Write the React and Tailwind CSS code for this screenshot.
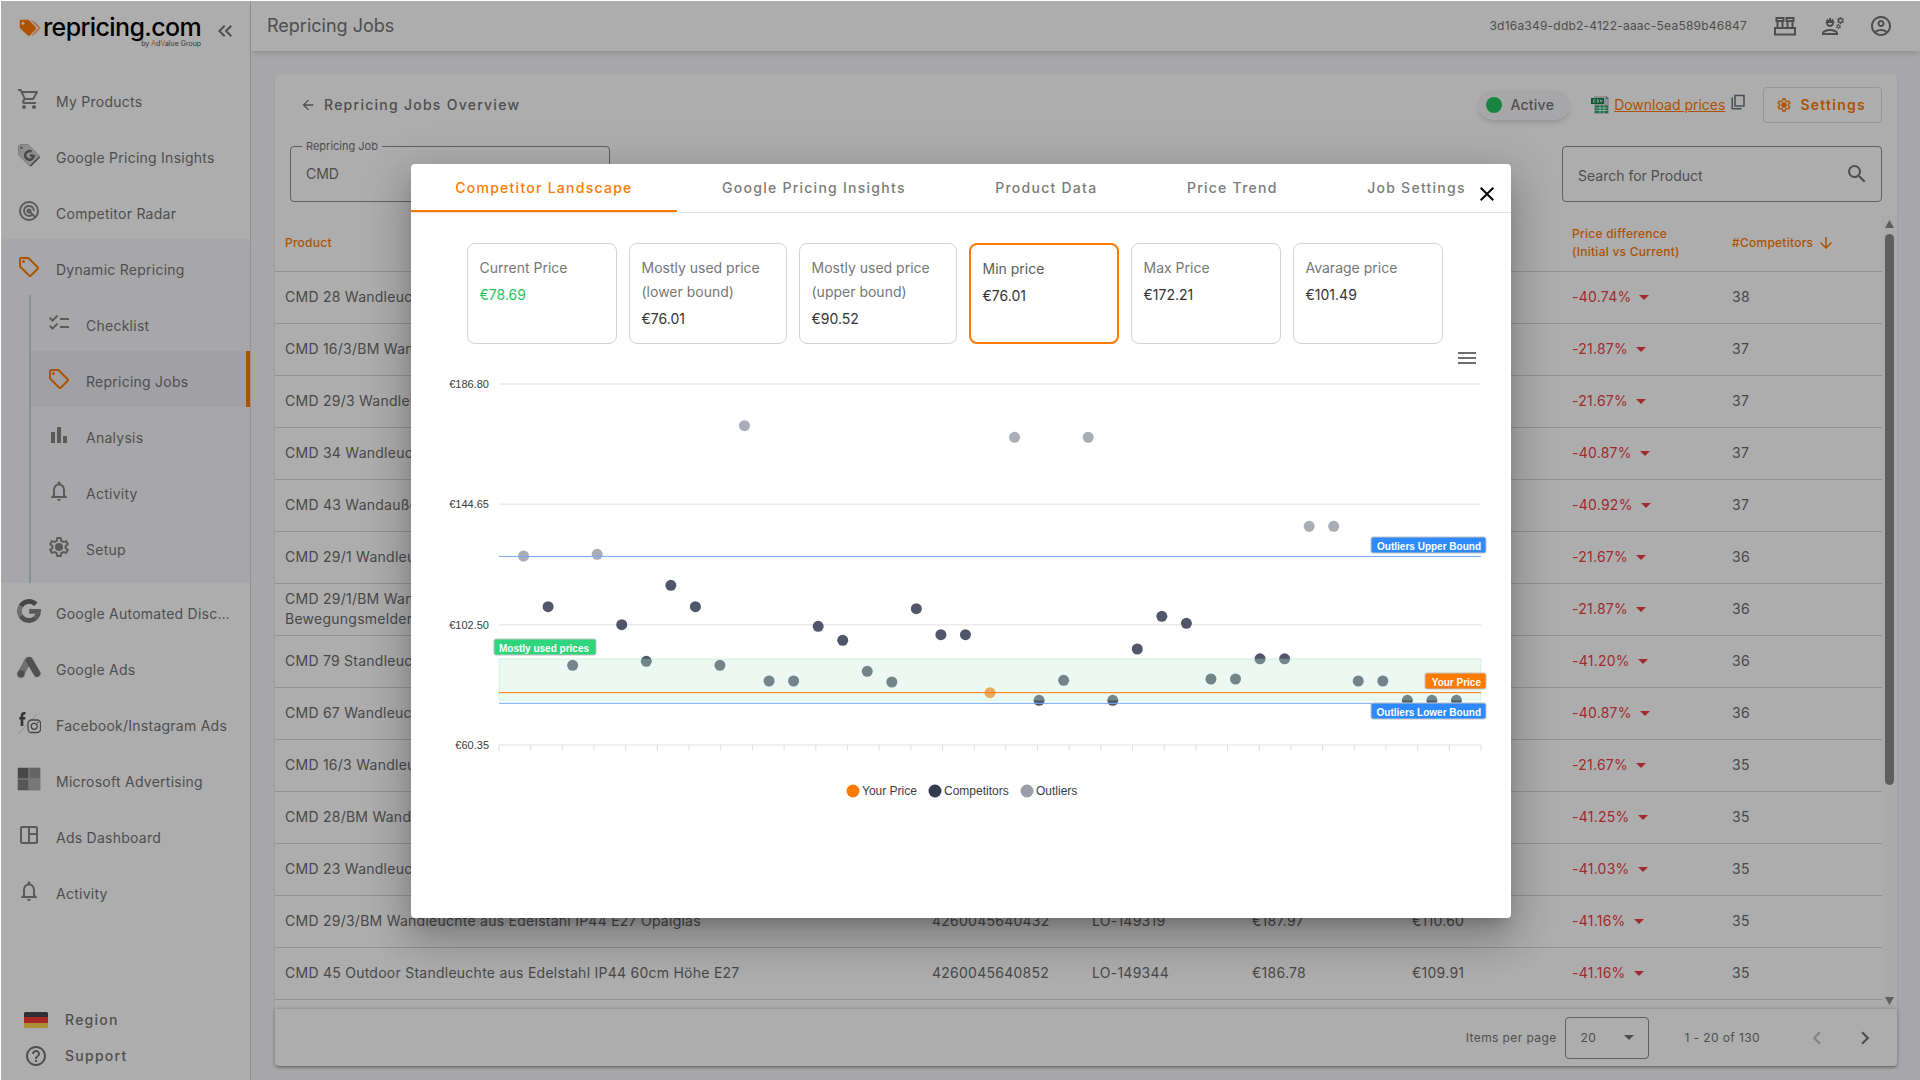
import { useState } from 'react';
import {
  MdArrowBack,
  MdArrowDownward,
  MdArrowDropDown,
  MdBarChart,
  MdChecklist,
  MdChevronLeft,
  MdChevronRight,
  MdClose,
  MdHelpOutline,
  MdKeyboardDoubleArrowLeft,
  MdMenu,
  MdNotificationsNone,
  MdOutlineAccountCircle,
  MdOutlineEngineering,
  MdOutlineLocalOffer,
  MdOutlineShoppingCart,
  MdOutlineSpaceDashboard,
  MdSearch,
} from 'react-icons/md';

/* ---------- Icons ---------- */

const TagLogo = () => (
  <svg viewBox="0 0 22 18" className="mt-1.5 h-[18px] w-[22px] shrink-0">
    <path d="M12.5 1.5l7.5 7.5-7 7.5M15.5 3l5.5 6-5.5 6" fill="none" stroke="#ffb380" strokeWidth="1.2" />
    <path d="M2 .8h6.6c.7 0 1.2.3 1.7.8l6.2 6.300c.8.8.8 1.800 0 2.600l-5.400 5.700c-.8.8-1.800.8-2.600 0L1.600 9.800C1 9.200.7 8.700.7 8V2.200C.7 1.400 1.200.8 2 .8z" fill="#ff7a00" />
    <circle cx="4" cy="4.2" r="1.5" fill="#fff" />
  </svg>
);

const PricingTagIcon = () => (
  <svg viewBox="0 0 24 24" className="h-6 w-6">
    <path d="M3 1.500h8l11 11c.8.8.8 1.600 0 2.400l-7.500 7.500c-.8.8-1.600.8-2.400 0L1.500 12V3z" fill="#d2d2d2" stroke="#b8b8b8" />
    <path d="M22.500 14l-9 9" stroke="#666" strokeWidth="1.500" />
    <circle cx="4.500" cy="4.800" r="1.200" fill="#777" />
    <path d="M14.500 8.600a4.300 4.300 0 1 0 2.200 4.300l-3.600-.7" fill="none" stroke="#6a6a6a" strokeWidth="2.400" />
  </svg>
);

const RadarIcon = () => (
  <svg viewBox="0 0 24 24" className="h-6 w-6" fill="none" stroke="#858585" strokeWidth="2">
    <circle cx="12" cy="12" r="9" />
    <path d="M15.500 15.500A5 5 0 1 1 17 12" />
    <circle cx="12" cy="12" r="1.500" fill="#858585" />
    <path d="M12 12l6 6" />
  </svg>
);

const GoogleIcon = () => (
  <svg viewBox="0 0 24 24" className="h-6 w-6" fill="none" strokeWidth="4.800">
    <path d="M18.800 5.300A9.600 9.600 0 0 0 3.800 7.100" stroke="#666" />
    <path d="M3.800 7.100a9.600 9.600 0 0 0 0 9.800" stroke="#a2a2a2" />
    <path d="M3.800 16.900a9.600 9.600 0 0 0 14.700 2" stroke="#777" />
    <path d="M18.500 18.900a9 9 0 0 0 3-6.600H12.200" stroke="#858585" />
  </svg>
);

const GoogleAdsIcon = () => (
  <svg viewBox="0 0 24 24" className="h-6 w-6" strokeLinecap="round" strokeWidth="7">
    <path d="M11 5.500L4 18.500" stroke="#a6a6a6" />
    <path d="M12.500 5.500l7.500 13" stroke="#787878" />
    <circle cx="4" cy="19" r="3.700" fill="#757575" />
  </svg>
);

const FacebookInstagramIcon = () => (
  <svg viewBox="0 0 24 24" className="h-6 w-6" fill="none">
    <path d="M8.500 2.200H7.300C5.700 2.200 5 3 5 4.500V15M2.300 7.200h6" stroke="#4b4b4b" strokeWidth="2.600" />
    <path d="M20 3L1 23" stroke="#ccc" strokeWidth=".8" />
    <rect x="11" y="9" width="12.500" height="12.500" rx="3.500" stroke="#6a6a6a" strokeWidth="1.300" />
    <circle cx="17.200" cy="15.300" r="3" stroke="#6a6a6a" strokeWidth="1.300" />
    <circle cx="20.800" cy="11.600" r=".8" fill="#6a6a6a" />
  </svg>
);

const MicrosoftIcon = () => (
  <svg viewBox="0 0 24 24" className="h-6 w-6">
    <path d="M.5.500h23v23H.5z" fill="#b5b5b5" />
    <path d="M1 1h10.300v10.300H1z" fill="#6b6b6b" />
    <path d="M12.700 1H23v10.300H12.700z" fill="#969696" />
    <path d="M1 12.700h10.300V23H1z" fill="#808080" />
    <path d="M12.700 12.700H23V23H12.700z" fill="#b0b0b0" />
  </svg>
);

const GearIcon = ({ className }) => (
  <svg viewBox="0 0 24 24" className={className} fill="currentColor">
    <path
      fillRule="evenodd"
      d="M14.500 22h-5l-.6-3.100-1.500-.9-3 1-2.500-4.300L4.300 12.700v-1.500L1.900 9.200l2.500-4.300 3 1 1.500-.8L9.500 2h5l.6 3.100 1.500.8 3-1 2.500 4.300-2.400 2v1.600l2.400 2-2.500 4.300-3-1-1.500.8zM11.100 20h1.800l.5-2.500 2.800-1.600 2.300.8 1-1.600-1.900-1.600v-3.100l1.900-1.500-1-1.700-2.300.9-2.800-1.600L12.900 4h-1.800l-.5 2.500-2.800 1.600-2.300-.9-1 1.700 1.900 1.500v3.100l-1.900 1.600 1 1.600 2.300-.8 2.800 1.600z"
    />
    <circle cx="12" cy="12" r="4" />
  </svg>
);

const ToolboxIcon = () => (
  <svg viewBox="0 0 24 24" className="h-6 w-6" fill="none" stroke="currentColor" strokeWidth="2">
    <path d="M2 14h20v6.500H2zM4.500 14V7.500M9.500 14V7.500M14.500 14V7.500M19.500 14V7.500M3.500 4h7v3h-7zM13.500 4h7v3h-7z" />
  </svg>
);

const CsvIcon = () => (
  <svg viewBox="0 0 20 20" className="h-5 w-5">
    <path d="M4 1h12l3 3v15H4z" fill="#d5d5d5" />
    <path d="M16 1l3 3h-3z" fill="#888" />
    <path d="M1 3h13v6H1z" fill="#14804a" />
    <path d="M3.500 4.800h2M3.500 4.800v2.400h2M8.500 4.800H7v1.200h1.500v1.200H7M10 4.500l1.200 2.700 1.200-2.700" fill="none" stroke="#fff" strokeWidth=".8" />
    <path d="M5 10.500h13V18H5z" fill="#22a566" />
    <path d="M5.500 13h12M5.500 15.500h12M10 10.500V18M14 10.500V18" stroke="#e7fff2" strokeWidth=".9" />
  </svg>
);

const CopyIcon = () => (
  <svg viewBox="0 0 14 16" className="h-4 w-[14px]" fill="none" stroke="#6b7280" strokeWidth="1.500">
    <path d="M4 1.500h9v10.500H4z" />
    <path d="M1.200 3.500v11.200h9.300" />
  </svg>
);

const GermanFlag = () => (
  <svg viewBox="0 0 24 16" className="h-4 w-6">
    <rect width="24" height="16" rx="1.500" fill="#ffd34d" />
    <path d="M0 5h24v6H0z" fill="#f93939" />
    <path d="M1.500 0h21A1.500 1.500 0 0 1 24 1.500V5H0V1.500A1.500 1.500 0 0 1 1.500 0z" fill="#464655" />
  </svg>
);

/* ---------- Data ---------- */

const mainNav = [
  { label: 'My Products', icon: <MdOutlineShoppingCart size={24} /> },
  { label: 'Google Pricing Insights', icon: <PricingTagIcon /> },
  { label: 'Competitor Radar', icon: <RadarIcon /> },
];

const repricingNav = [
  { label: 'Checklist', icon: <MdChecklist size={24} /> },
  { label: 'Repricing Jobs', icon: <MdOutlineLocalOffer size={24} className="text-[#ff7a00]" />, active: true },
  { label: 'Analysis', icon: <MdBarChart size={24} /> },
  { label: 'Activity', icon: <MdNotificationsNone size={24} /> },
  { label: 'Setup', icon: <GearIcon className="h-6 w-6" /> },
];

const adsNav = [
  { label: 'Google Automated Discounts', icon: <GoogleIcon /> },
  { label: 'Google Ads', icon: <GoogleAdsIcon /> },
  { label: 'Facebook/Instagram Ads', icon: <FacebookInstagramIcon /> },
  { label: 'Microsoft Advertising', icon: <MicrosoftIcon /> },
  { label: 'Ads Dashboard', icon: <MdOutlineSpaceDashboard size={24} /> },
  { label: 'Activity', icon: <MdNotificationsNone size={24} /> },
];

const products = [
  { name: 'CMD 28 Wandleuchte aus Edelstahl IP44 E27', ean: '4260045640289', sku: 'LO-149301', initial: '€132.77', current: '€78.69', diff: '-40.74%', competitors: 38 },
  { name: 'CMD 16/3/BM Wandleuchte aus Edelstahl IP44', ean: '4260045640166', sku: 'LO-149305', initial: '€154.62', current: '€120.80', diff: '-21.87%', competitors: 37 },
  { name: 'CMD 29/3 Wandleuchte aus Edelstahl IP44', ean: '4260045640296', sku: 'LO-149318', initial: '€142.86', current: '€111.90', diff: '-21.67%', competitors: 37 },
  { name: 'CMD 34 Wandleuchte aus Edelstahl IP44', ean: '4260045640340', sku: 'LO-149325', initial: '€125.21', current: '€74.04', diff: '-40.87%', competitors: 37 },
  { name: 'CMD 43 Wandaußenleuchte aus Edelstahl', ean: '4260045640432', sku: 'LO-149342', initial: '€138.66', current: '€81.92', diff: '-40.92%', competitors: 37 },
  { name: 'CMD 29/1 Wandleuchte aus Edelstahl IP44', ean: '4260045640291', sku: 'LO-149316', initial: '€121.01', current: '€94.79', diff: '-21.67%', competitors: 36 },
  { name: 'CMD 29/1/BM Wandleuchte aus Edelstahl IP44 E27 Opalglas Außenleuchte mit Bewegungsmelder', ean: '4260045640293', sku: 'LO-149317', initial: '€158.82', current: '€124.09', diff: '-21.87%', competitors: 36 },
  { name: 'CMD 79 Standleuchte aus Edelstahl IP44', ean: '4260045640791', sku: 'LO-149379', initial: '€163.87', current: '€96.36', diff: '-41.20%', competitors: 36 },
  { name: 'CMD 67 Wandleuchte aus Edelstahl IP44', ean: '4260045640678', sku: 'LO-149367', initial: '€117.65', current: '€69.57', diff: '-40.87%', competitors: 36 },
  { name: 'CMD 16/3 Wandleuchte aus Edelstahl IP44', ean: '4260045640163', sku: 'LO-149304', initial: '€129.41', current: '€101.37', diff: '-21.67%', competitors: 35 },
  { name: 'CMD 28/BM Wandleuchte aus Edelstahl', ean: '4260045640285', sku: 'LO-149302', initial: '€171.43', current: '€100.72', diff: '-41.25%', competitors: 35 },
  { name: 'CMD 23 Wandleuchte aus Edelstahl IP44', ean: '4260045640234', sku: 'LO-149323', initial: '€147.90', current: '€87.22', diff: '-41.03%', competitors: 35 },
  { name: 'CMD 29/3/BM Wandleuchte aus Edelstahl IP44 E27 Opalglas', ean: '4260045640432', sku: 'LO-149319', initial: '€187.97', current: '€110.60', diff: '-41.16%', competitors: 35 },
  { name: 'CMD 45 Outdoor Standleuchte aus Edelstahl IP44 60cm Höhe E27', ean: '4260045640852', sku: 'LO-149344', initial: '€186.78', current: '€109.91', diff: '-41.16%', competitors: 35 },
];

const tabs = ['Competitor Landscape', 'Google Pricing Insights', 'Product Data', 'Price Trend', 'Job Settings'];

const priceCards = [
  { label: 'Current Price', value: '€78.69', green: true },
  { label: 'Mostly used price (lower bound)', value: '€76.01', wide: true },
  { label: 'Mostly used price (upper bound)', value: '€90.52', wide: true },
  { label: 'Min price', value: '€76.01', selected: true },
  { label: 'Max Price', value: '€172.21' },
  { label: 'Avarage price', value: '€101.49' },
];

const prices = [
  126.55, 108.79, 88.27, 127.15, 102.49, 89.67, 116.29, 108.79, 88.27, 172.21,
  82.77, 82.77, 101.93, 97.03, 86.17, 82.42, 108.09, 98.99, 98.99, 78.69,
  168.13, 76.01, 83.01, 168.13, 76.01, 93.98, 105.43, 102.98, 83.47, 83.47,
  90.52, 90.52, 136.96, 136.96, 82.77, 82.77, 76.01, 76.01, 76.01,
];
const YOUR_INDEX = 19;
const UPPER_BOUND = 126.41;
const LOWER_BOUND = 74.95;

/* ---------- Chart ---------- */

const PLOT = { left: 88, right: 1070, top: 40, bottom: 401 };
const toX = (i) => PLOT.left + ((PLOT.right - PLOT.left) * i) / 40;
const toY = (price) => PLOT.bottom - ((price - 60.35) / 126.45) * (PLOT.bottom - PLOT.top);

const dotColor = (price, i) => {
  if (i === YOUR_INDEX) return '#ff7a00';
  return price > UPPER_BOUND ? '#9b9eaa' : '#333a50';
};

const ChartTag = ({ x, y, width, color, anchor, children }) => (
  <g>
    <rect x={x} y={y} width={width} height="16" rx="2" fill={color} stroke="#c2c2c2" />
    <text
      x={anchor === 'end' ? x + width - 5 : x + 5}
      y={y + 13}
      textAnchor={anchor}
      fill="#fff"
      className="text-[10px] font-bold"
    >
      {children}
    </text>
  </g>
);

function PriceChart() {
  const { left, right, bottom } = PLOT;
  const width = right - left;

  return (
    <svg viewBox="0 0 1100 574" className="block w-full font-['Liberation_Sans',sans-serif]">
      {[186.8, 144.65, 102.5, 60.35].map((value) => (
        <g key={value}>
          <path d={`M${left} ${toY(value)}H${right}`} stroke="#ebebeb" strokeWidth="1.500" />
          <text x="78" y={toY(value) + 4} textAnchor="end" fill="#373d3f" className="text-[11px]">
            €{value.toFixed(2)}
          </text>
        </g>
      ))}
      {Array.from({ length: 32 }, (_, i) => (
        <path key={i} d={`M${left + (width * i) / 31} ${bottom}v6`} stroke="#e0e0e0" />
      ))}

      {prices.map((price, i) => (
        <circle key={i} cx={toX(i + 1)} cy={toY(price)} r="5.500" fill={dotColor(price, i)} fillOpacity="0.85" />
      ))}

      {/* Range of the mostly used prices */}
      <rect
        x={left}
        y={toY(90.52)}
        width={width}
        height={toY(76.01) - toY(90.52)}
        fill="#c0ecd5"
        fillOpacity="0.31"
        stroke="#2fd57c"
        strokeOpacity="0.18"
      />
      <path d={`M${left} ${toY(UPPER_BOUND)}H${right}M${left} ${toY(LOWER_BOUND)}H${right}`} stroke="#6fa9f7" />
      <path d={`M${left} ${toY(78.69)}H${right}`} stroke="#ff7a00" />

      <ChartTag x={83} y={295} width={102} color="#2fd57c" anchor="start">Mostly used prices</ChartTag>
      <ChartTag x={960} y={193} width={115} color="#2f8aff" anchor="end">Outliers Upper Bound</ChartTag>
      <ChartTag x={1014} y={329} width={61} color="#ff7a00" anchor="end">Your Price</ChartTag>
      <ChartTag x={960} y={359} width={115} color="#2f8aff" anchor="end">Outliers Lower Bound</ChartTag>

      {/* Legend */}
      <g fill="#373d3f" className="text-[12px]">
        <circle cx="442" cy="447" r="6.500" fill="#ff7a00" />
        <text x="451" y="451">Your Price</text>
        <circle cx="524" cy="447" r="6.500" fill="#333a50" />
        <text x="533" y="451">Competitors</text>
        <circle cx="616" cy="447" r="6.500" fill="#9b9eaa" />
        <text x="625" y="451">Outliers</text>
      </g>
    </svg>
  );
}

/* ---------- Layout parts ---------- */

const NavItem = ({ item }) => (
  <a
    href="#"
    className={`flex h-14 items-center gap-[15px] px-4 ${
      item.active ? 'rounded-l border-r-4 border-[#ff7a00] bg-[#edeef4]' : ''
    }`}
  >
    <span className="flex w-6 shrink-0 justify-center text-[#858585]">{item.icon}</span>
    <span className="truncate pt-1.5">{item.label}</span>
  </a>
);

function Sidebar() {
  return (
    <aside className="flex w-[250px] shrink-0 flex-col border-r border-[#d9d9de] bg-white">
      <div className="flex h-[70px] items-start pt-3 pl-[18px]">
        <TagLogo />
        <div className="ml-0.5 flex flex-col items-end">
          <span className="text-[25px] leading-7 font-medium tracking-tight text-black">repricing.com</span>
          <span className="text-[7px] leading-[6px] text-[#555]">
            by <span className="text-[#ff7a00]">A</span>d<span className="text-[#ff7a00]">V</span>alue Group
          </span>
        </div>
        <button type="button" aria-label="Collapse menu" className="ml-3 pt-1.5 text-[#757575]">
          <MdKeyboardDoubleArrowLeft size={24} />
        </button>
      </div>

      <nav className="text-sm tracking-[0.018em] text-[#747474]">
        {mainNav.map((item) => <NavItem key={item.label} item={item} />)}
        <div className="rounded-t bg-[#f7f7fb]">
          <NavItem item={{ label: 'Dynamic Repricing', icon: <MdOutlineLocalOffer size={24} className="text-[#ff7a00]" /> }} />
          <div className="ml-7 border-l-2 border-slate-300 pb-2">
            {repricingNav.map((item) => <NavItem key={item.label} item={item} />)}
          </div>
        </div>
        {adsNav.map((item) => <NavItem key={item.label} item={item} />)}
      </nav>

      <div className="mt-auto flex flex-col pb-1.5 pl-[23px] text-sm font-medium tracking-[0.09em] text-[#747474]">
        <button type="button" className="flex h-9 items-center gap-[17px]">
          <GermanFlag />
          Region
        </button>
        <button type="button" className="flex h-9 items-center gap-[17px]">
          <span className="flex w-6 justify-center"><MdHelpOutline size={24} /></span>
          Support
        </button>
      </div>
    </aside>
  );
}

function ProductTable() {
  return (
    <div className="flex min-h-0 flex-1 overflow-hidden">
      <div className="min-w-0 flex-1">
        <table className="w-full table-fixed text-left text-sm tracking-[0.018em] text-[#6c6c6c]">
          <thead>
            <tr className="h-14 border-b border-[#d4d6da] text-xs leading-[18px] text-[#ff7a00]">
              <th className="px-2.5 font-medium">Product</th>
              <th className="w-40 px-2.5 font-medium">EAN</th>
              <th className="w-40 px-2.5 font-medium">SKU</th>
              <th className="w-40 px-2.5 font-medium">Initial Price</th>
              <th className="w-40 px-2.5 font-medium">Current Price</th>
              <th className="w-40 px-2.5 leading-[18px] font-medium">Price difference<br />(Initial vs Current)</th>
              <th className="w-40 px-2.5 font-medium">
                <span className="flex items-center gap-1">#Competitors <MdArrowDownward size={18} /></span>
              </th>
            </tr>
          </thead>
          <tbody>
            {products.map((p) => (
              <tr key={p.name} className="h-[52px] border-b border-[#d4d6da]">
                <td className="px-2.5">{p.name}</td>
                <td className="px-2.5">{p.ean}</td>
                <td className="px-2.5">{p.sku}</td>
                <td className="px-2.5">{p.initial}</td>
                <td className="px-2.5">{p.current}</td>
                <td className="px-2.5 text-[#ef4044]">
                  <span className="flex items-center gap-px">{p.diff} <MdArrowDropDown size={24} /></span>
                </td>
                <td className="px-2.5">{p.competitors}</td>
              </tr>
            ))}
          </tbody>
        </table>
      </div>
      {/* Scrollbar */}
      <div className="flex w-[15px] shrink-0 flex-col items-center bg-[#fcfcfc] pt-[5px] pb-1">
        <span className="h-2 w-[9px] bg-[#8b8b8b] [clip-path:polygon(50%_0,100%_100%,0_100%)]" />
        <span className="mt-1.5 h-[551px] w-[9px] rounded-full bg-[#8b8b8b]" />
        <span className="mt-auto h-2 w-[9px] bg-[#8b8b8b] [clip-path:polygon(0_0,100%_0,50%_100%)]" />
      </div>
    </div>
  );
}

function JobPage() {
  return (
    <section className="mt-[23px] mr-[23px] mb-[13px] ml-6 flex min-h-0 flex-1 flex-col rounded bg-white shadow-sm">
      <div className="px-[15px] py-[13px]">
        <div className="flex h-9 items-center text-[#747474]">
          <a href="#" className="ml-2.5 flex items-center gap-2 text-sm font-medium tracking-[0.09em]">
            <MdArrowBack size={16} />
            Repricing Jobs Overview
          </a>
          <span className="ml-auto flex h-[30px] items-center gap-2 rounded-full bg-[#f7f7fb] px-2 pr-4 text-sm font-medium tracking-[0.018em] shadow-md">
            <span className="h-4 w-4 rounded-full bg-[#22c55e]" />
            Active
          </span>
          <span className="ml-5 flex items-center gap-1">
            <CsvIcon />
            <a href="#" className="text-sm text-[#ff7a00] underline">Download prices</a>
            <button type="button" aria-label="Copy link" className="ml-0.5 pb-1.5"><CopyIcon /></button>
          </span>
          <button
            type="button"
            className="ml-[18px] flex h-9 items-center gap-2 rounded border border-[#dcdcdf] pr-[15px] pl-3 text-sm font-semibold tracking-[0.09em] text-[#ff7a00]"
          >
            <GearIcon className="h-4 w-4" />
            Settings
          </button>
        </div>

        <div className="mt-[23px] flex justify-between text-sm text-[#747474]">
          <div className="relative w-80">
            <label htmlFor="job" className="absolute -top-2 left-3 bg-white px-1 text-[11px] leading-4">
              Repricing Job
            </label>
            <select id="job" className="h-14 w-full appearance-none rounded border border-[#8c8c8c] px-[15px] text-sm">
              <option>CMD</option>
            </select>
          </div>
          <div className="flex h-14 w-80 items-center rounded border border-[#8c8c8c] pr-3 pl-[15px]">
            <input
              type="text"
              aria-label="Search for Product"
              placeholder="Search for Product"
              className="min-w-0 flex-1 pt-1 outline-none placeholder:text-[#747474]"
            />
            <MdSearch size={24} />
          </div>
        </div>
      </div>

      <ProductTable />

      <div className="z-10 flex h-[58px] shrink-0 items-center justify-end rounded-b border-b border-[#aaa] bg-white pr-[19px] text-xs tracking-[0.033em] text-[#747474] shadow-[0_0_4px_rgba(0,0,0,0.25)]">
        <label htmlFor="page-size">Items per page</label>
        <div className="relative ml-2">
          <select id="page-size" className="h-[42px] w-[84px] appearance-none rounded border border-[#8c8c8c] px-[15px]">
            <option>20</option>
          </select>
          <MdArrowDropDown size={24} className="pointer-events-none absolute top-2 right-2" />
        </div>
        <span className="ml-9">1 - 20 of 130</span>
        <button type="button" aria-label="Previous page" className="ml-11 text-[#c2c2c2]" disabled>
          <MdChevronLeft size={26} />
        </button>
        <button type="button" aria-label="Next page" className="ml-[22px]">
          <MdChevronRight size={26} />
        </button>
      </div>
    </section>
  );
}

function CompetitorDialog() {
  const [activeTab, setActiveTab] = useState(tabs[0]);

  return (
    <div
      role="dialog"
      aria-label="Competitor Landscape"
      className="relative w-full max-w-[1100px] rounded bg-white shadow-[0_11px_15px_-7px_rgba(0,0,0,0.2),0_24px_38px_3px_rgba(0,0,0,0.14),0_9px_46px_8px_rgba(0,0,0,0.12)]"
    >
      <div role="tablist" className="flex h-[49px] border-b border-[#e2e2e6] text-sm font-medium tracking-[0.09em]">
        {tabs.map((tab) => (
          <button
            key={tab}
            type="button"
            role="tab"
            aria-selected={activeTab === tab}
            onClick={() => setActiveTab(tab)}
            className={`flex-auto border-b-2 pt-0.5 ${
              activeTab === tab ? 'border-[#ff7a00] text-[#ff7a00]' : 'border-transparent text-[#7c7c7c]'
            }`}
          >
            {tab}
          </button>
        ))}
      </div>
      <button type="button" aria-label="Close" className="absolute top-[18px] right-3 text-black">
        <MdClose size={24} />
      </button>

      <div className="flex gap-3 pt-[30px] pl-14">
        {priceCards.map((card) => (
          <div
            key={card.label}
            className={`h-[101px] rounded-lg p-3 text-sm ${card.wide ? 'w-[158px]' : 'w-[150px]'} ${
              card.selected ? 'border-2 border-[#ff7a00]' : 'border border-[#d3d3dc]'
            }`}
          >
            <p className={`leading-6 ${card.selected ? 'text-[#5c5c5c]' : 'text-[#777]'}`}>{card.label}</p>
            <p className={`pt-1 leading-[22px] ${card.green ? 'text-[#22c55e]' : 'text-[#333]'}`}>{card.value}</p>
          </div>
        ))}
      </div>

      <div className="relative">
        <PriceChart />
        <button type="button" aria-label="Chart menu" className="absolute top-0.5 right-8 text-[#6e6e6e]">
          <MdMenu size={24} />
        </button>
      </div>
    </div>
  );
}

export default function App() {
  return (
    <div className="h-screen bg-white pt-px pl-px font-['Inter',sans-serif]">
      <div className="relative flex h-full overflow-hidden bg-[#f7f7fb]">
        <Sidebar />
        <main className="flex min-w-0 flex-1 flex-col">
          <header className="flex h-[50px] shrink-0 items-center bg-white pr-[27px] pl-4 text-[#747474] shadow-md">
            <h1 className="text-lg">Repricing Jobs</h1>
            <span className="ml-auto text-xs tracking-[0.018em]">3d16a349-ddb2-4122-aaac-5ea589b46847</span>
            <div className="ml-[26px] flex gap-6">
              <button type="button" aria-label="Shops"><ToolboxIcon /></button>
              <button type="button" aria-label="Team"><MdOutlineEngineering size={24} /></button>
              <button type="button" aria-label="Account"><MdOutlineAccountCircle size={24} /></button>
            </div>
          </header>
          <JobPage />
        </main>

        <div className="absolute inset-0 z-20 flex items-center justify-center bg-black/32">
          <CompetitorDialog />
        </div>
      </div>
    </div>
  );
}
